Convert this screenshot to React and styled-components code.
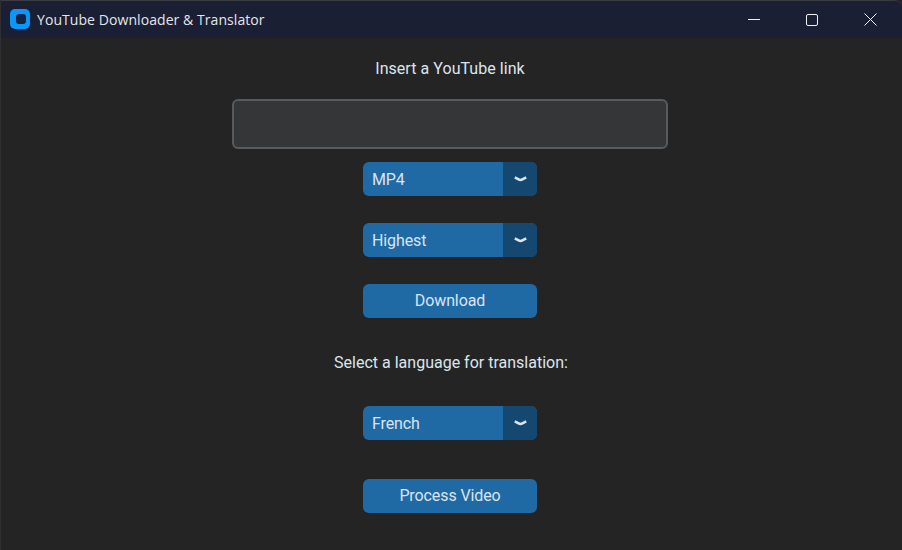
import React from 'react';
import styled, { createGlobalStyle } from 'styled-components';

const Global = createGlobalStyle`
  html, body { margin: 0; padding: 0; background: #242424; overflow: hidden; }
  * { box-sizing: border-box; }
`;

const Window = styled.div`
  width: 902px;
  height: 550px;
  background: #242424;
  border-top: 1px solid #3a3c42;
  border-left: 1px solid #2e2f33;
  border-top-right-radius: 8px;
  display: flex;
  flex-direction: column;
  font-family: Roboto, sans-serif;
  overflow: hidden;
`;

const TitleBar = styled.header`
  height: 37px;
  flex: none;
  background: #1a1f33;
  display: flex;
  align-items: center;
  padding-left: 9px;
`;

const LogoMark = styled.svg`
  flex: none;
  margin-bottom: 1px;
`;

const AppTitle = styled.span`
  margin-left: 7px;
  font-family: "Open Sans", sans-serif;
  font-size: 14px;
  letter-spacing: 0.07px;
  color: #e4e6ea;
  white-space: nowrap;
`;

const WindowControls = styled.div`
  margin-left: auto;
  display: flex;
  height: 100%;
  padding-right: 2px;
`;

const ControlButton = styled.div`
  width: 58.5px;
  height: 100%;
  display: flex;
  align-items: center;
  justify-content: center;
  color: #f2f2f2;
`;

const Content = styled.main`
  flex: 1;
  display: flex;
  flex-direction: column;
  align-items: center;
  padding-right: 3px;
`;

const Label = styled.div`
  font-size: 16px;
  line-height: 20px;
  color: #dce4ee;
  margin-top: ${p => p.$top}px;
  margin-left: ${p => p.$shift || 0}px;
  letter-spacing: ${p => p.$spacing || 0}px;
  white-space: nowrap;
`;

const LinkInput = styled.input`
  display: block;
  width: 436px;
  height: 50px;
  margin-top: ${p => p.$top}px;
  background: #343638;
  border: 2px solid #565b5e;
  border-radius: 6px;
  outline: none;
`;

const Select = styled.div`
  width: 174px;
  height: 34px;
  margin-top: ${p => p.$top}px;
  border-radius: 6px;
  overflow: hidden;
  display: flex;
  background: #1f6aa5;
  color: #dce4ee;
  font-size: 16px;
`;

const SelectValue = styled.div`
  flex: 1;
  display: flex;
  align-items: center;
  padding-left: 9px;
  letter-spacing: -0.1px;
`;

const SelectArrow = styled.div`
  width: 34px;
  display: flex;
  align-items: center;
  justify-content: center;
  background: #144870;
`;

const ActionButton = styled.button`
  display: block;
  width: 174px;
  height: 34px;
  margin-top: ${p => p.$top}px;
  padding: 0 0 2px;
  border: 0;
  border-radius: 6px;
  background: #1f6aa5;
  color: #dce4ee;
  font-family: Roboto, sans-serif;
  font-size: 16px;
  letter-spacing: -0.1px;
`;

const Logo = () => (
  <LogoMark width="20" height="20" viewBox="0 0 20 20">
    <rect x="0" y="0" width="20" height="20" rx="5" fill="#0a97fb" />
    <rect x="6" y="5" width="10" height="10" rx="3" fill="#14233f" />
  </LogoMark>
);

const Chevron = () => (
  <svg width="13" height="6" viewBox="0 0 13 6">
    <path d="M.8 1.3 L4.6 3.4 Q6.5 4.6 8.4 3.4 L12.2 1.3" fill="none" stroke="#dce4ee" strokeWidth="2.6" />
  </svg>
);

const Dropdown = ({ value, top }) => (
  <Select $top={top}>
    <SelectValue>{value}</SelectValue>
    <SelectArrow><Chevron /></SelectArrow>
  </Select>
);

export default function App() {
  return (
    <Window>
      <Global />
      <TitleBar>
        <Logo />
        <AppTitle>YouTube Downloader &amp; Translator</AppTitle>
        <WindowControls>
          <ControlButton>
            <svg width="12" height="12" viewBox="0 0 12 12"><path d="M0 5.5H12" stroke="currentColor" strokeWidth="1" /></svg>
          </ControlButton>
          <ControlButton>
            <svg width="12" height="12" viewBox="0 0 12 12"><rect x=".5" y=".5" width="11" height="11" rx="1.5" fill="none" stroke="currentColor" strokeWidth="1" /></svg>
          </ControlButton>
          <ControlButton>
            <svg width="13" height="13" viewBox="0 0 13 13"><path d="M.5 .5L12.5 12.5M12.5 .5L.5 12.5" stroke="currentColor" strokeWidth="1" /></svg>
          </ControlButton>
        </WindowControls>
      </TitleBar>
      <Content>
        <Label $top={21} $spacing={0.05}>Insert a YouTube link</Label>
        <LinkInput $top={20} />
        <Dropdown value="MP4" top={13} />
        <Dropdown value="Highest" top={27} />
        <ActionButton $top={27}>Download</ActionButton>
        <Label $top={35} $shift={2}>Select a language for translation:</Label>
        <Dropdown value="French" top={33} />
        <ActionButton $top={39}>Process Video</ActionButton>
      </Content>
    </Window>
  );
}
